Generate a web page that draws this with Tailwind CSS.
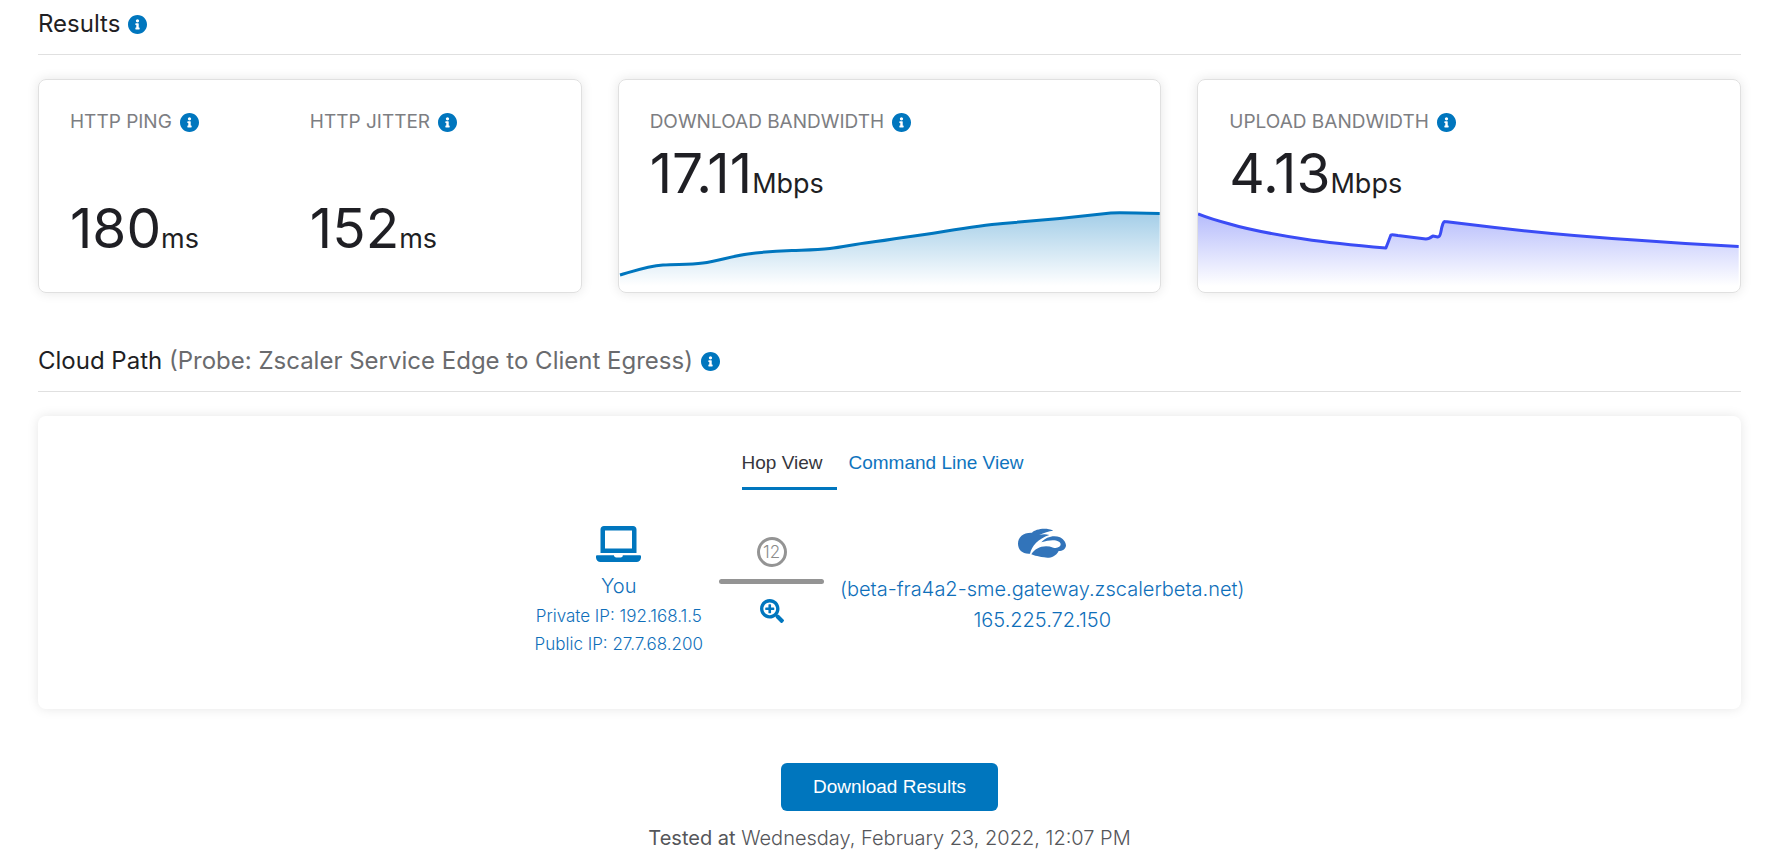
<!DOCTYPE html>
<html lang="en">
<head>
    <meta charset="UTF-8">
    <meta name="viewport" content="width=device-width, initial-scale=1.0">
    <title>Results</title>
    <script src="https://cdn.jsdelivr.net/npm/@tailwindcss/browser@4"></script>
</head>
<body class="bg-white font-['Inter',sans-serif] text-[#1f1f24]">
    <!-- Shared icon -->
    <svg class="hidden">
        <symbol id="info" viewBox="8 8 496 496">
            <path fill="currentColor" d="M256 8C119.043 8 8 119.083 8 256c0 136.997 111.043 248 248 248s248-111.003 248-248C504 119.083 392.957 8 256 8zm0 110c23.196 0 42 18.804 42 42s-18.804 42-42 42-42-18.804-42-42 18.804-42 42-42zm56 254c0 6.627-5.373 12-12 12h-88c-6.627 0-12-5.373-12-12v-24c0-6.627 5.373-12 12-12h12v-64h-12c-6.627 0-12-5.373-12-12v-24c0-6.627 5.373-12 12-12h64c6.627 0 12 5.373 12 12v100h12c6.627 0 12 5.373 12 12v24z"/>
        </symbol>
    </svg>

    <main class="pl-[38px] pr-[35px] pt-2">
        <div class="flex items-center gap-2 h-8">
            <h2 class="text-2xl">Results</h2>
            <button aria-label="About results" class="text-[#0076be]"><svg class="size-[19px]"><use href="#info"/></svg></button>
        </div>
        <hr class="mt-[14px] border-[#e0e0e0]">

        <section class="mt-6 grid grid-cols-3 gap-9">
            <div class="h-[214px] rounded-lg border border-[#e0e0e0] shadow-[0_0_12px_rgba(0,0,0,0.1)] px-[31px] pt-7 grid grid-cols-2 content-start">
                <div>
                    <div class="flex items-center gap-2 h-7">
                        <h3 class="text-[19px] text-[#7d7e82]">HTTP PING</h3>
                        <button aria-label="About HTTP ping" class="text-[#0076be]"><svg class="size-[19px]"><use href="#info"/></svg></button>
                    </div>
                    <p class="mt-[60px] text-[55px] leading-[64px]">180<span class="text-[27px] leading-none">ms</span></p>
                </div>
                <div>
                    <div class="flex items-center gap-2 h-7">
                        <h3 class="text-[19px] text-[#7d7e82]">HTTP JITTER</h3>
                        <button aria-label="About HTTP jitter" class="text-[#0076be]"><svg class="size-[19px]"><use href="#info"/></svg></button>
                    </div>
                    <p class="mt-[60px] text-[55px] leading-[64px]">152<span class="text-[27px] leading-none">ms</span></p>
                </div>
            </div>

            <div class="h-[214px] rounded-lg border border-[#e0e0e0] shadow-[0_0_12px_rgba(0,0,0,0.1)] pt-7 flex flex-col overflow-hidden">
                <div class="flex items-center gap-2 h-7 px-[31px]">
                    <h3 class="text-[19px] text-[#7d7e82]">DOWNLOAD BANDWIDTH</h3>
                    <button aria-label="About download bandwidth" class="text-[#0076be]"><svg class="size-[19px]"><use href="#info"/></svg></button>
                </div>
                <p class="mt-[5px] px-[31px] text-[55px] leading-[64px]">17.11<span class="text-[27px] leading-none">Mbps</span></p>
                <svg class="mt-auto shrink-0 w-full h-[86px]" viewBox="0 0 542 86" preserveAspectRatio="none">
                    <defs>
                        <linearGradient id="downFill" gradientUnits="userSpaceOnUse" x1="0" y1="7" x2="0" y2="80">
                            <stop offset="0" stop-color="#0076be" stop-opacity="0.36"/>
                            <stop offset="1" stop-color="#0076be" stop-opacity="0"/>
                        </linearGradient>
                    </defs>
                    <path fill="url(#downFill)" d="M1 69C15 65 29 60 44 59C58 58 70 59 84 57C99 55 113 50 129 48C143 46 158 45 173 44.500C186 44 198 44 211 42.500C224 41 237 38 250 36.500C262 35 275 33 288 31C320 27 352 20 384 17.500L441 12.500L492 7Q500 6.500 541 7.500V86H1Z"/>
                    <path fill="none" stroke="#0076be" stroke-width="3" d="M1 69C15 65 29 60 44 59C58 58 70 59 84 57C99 55 113 50 129 48C143 46 158 45 173 44.500C186 44 198 44 211 42.500C224 41 237 38 250 36.500C262 35 275 33 288 31C320 27 352 20 384 17.500L441 12.500L492 7Q500 6.500 541 7.500"/>
                </svg>
            </div>

            <div class="h-[214px] rounded-lg border border-[#e0e0e0] shadow-[0_0_12px_rgba(0,0,0,0.1)] pt-7 flex flex-col overflow-hidden">
                <div class="flex items-center gap-2 h-7 px-[31px]">
                    <h3 class="text-[19px] text-[#7d7e82]">UPLOAD BANDWIDTH</h3>
                    <button aria-label="About upload bandwidth" class="text-[#0076be]"><svg class="size-[19px]"><use href="#info"/></svg></button>
                </div>
                <p class="mt-[5px] px-[31px] text-[55px] leading-[64px]">4.13<span class="text-[27px] leading-none">Mbps</span></p>
                <svg class="mt-auto shrink-0 w-full h-[86px]" viewBox="0 0 542 86" preserveAspectRatio="none">
                    <defs>
                        <linearGradient id="upFill" gradientUnits="userSpaceOnUse" x1="0" y1="7" x2="0" y2="80">
                            <stop offset="0" stop-color="#3b4cf5" stop-opacity="0.38"/>
                            <stop offset="1" stop-color="#3b4cf5" stop-opacity="0"/>
                        </linearGradient>
                    </defs>
                    <path fill="url(#upFill)" d="M0 8C10 12 20 15 30 17.500C55 25 80 29 106 33C132 37 158 39.500 188 42Q190 37 193 29Q194 28.500 200 29.500L228 33Q231 33 235 30L240 31Q242 31 243 26Q245 15 247 15.500L297 21.500C344 27 390 31 437 34Q490 38 541 40.500V86H0Z"/>
                    <path fill="none" stroke="#3b4cf5" stroke-width="3" stroke-linejoin="round" d="M0 8C10 12 20 15 30 17.500C55 25 80 29 106 33C132 37 158 39.500 188 42Q190 37 193 29Q194 28.500 200 29.500L228 33Q231 33 235 30L240 31Q242 31 243 26Q245 15 247 15.500L297 21.500C344 27 390 31 437 34Q490 38 541 40.500"/>
                </svg>
            </div>
        </section>

        <div class="mt-[52px] flex items-center gap-2 h-8">
            <h2 class="text-2xl">Cloud Path <span class="text-[#6a6b6e]">(Probe: Zscaler Service Edge to Client Egress)</span></h2>
            <button aria-label="About cloud path" class="text-[#0076be]"><svg class="size-[19px]"><use href="#info"/></svg></button>
        </div>
        <hr class="mt-[14px] border-[#e0e0e0]">

        <section class="mt-6 h-[293px] rounded-lg shadow-[0_0_12px_rgba(0,0,0,0.1)] pt-8 flex flex-col items-center">
            <div role="tablist" class="flex gap-3 font-['Liberation_Sans',sans-serif] text-[19px] leading-[30px]">
                <button role="tab" aria-selected="true" class="pr-3.5 pb-[9px] border-b-3 border-[#0076be] text-[#36363c]">Hop View</button>
                <button role="tab" aria-selected="false" class="pr-3.5 pb-[9px] border-b-3 border-transparent text-[#0f74be]">Command Line View</button>
            </div>

            <div class="mt-9 flex items-start text-[#0f6fba] font-light">
                <div class="flex flex-col items-center">
                    <svg class="w-[45px] h-9 text-[#0076be]" viewBox="0 0 640 512">
                        <path fill="currentColor" d="M624 416H381.54c-.74 19.81-14.71 32-32.74 32H288c-18.69 0-33.02-17.47-32.77-32H16c-8.8 0-16 7.2-16 16v16c0 35.2 28.8 64 64 64h512c35.2 0 64-28.8 64-64v-16c0-8.8-7.2-16-16-16zM576 48c0-26.400-21.600-48-48-48H112C85.600 0 64 21.600 64 48v336h512V48zm-64 272H128V64h384v256z"/>
                    </svg>
                    <p class="mt-2 text-xl leading-8">You</p>
                    <p class="text-[17px] leading-7">Private IP: 192.168.1.5</p>
                    <p class="text-[17px] leading-7">Public IP: 27.7.68.200</p>
                </div>
                <div class="mx-4 mt-[11px] w-[105px] flex flex-col items-center">
                    <span class="size-[30px] rounded-full border-3 border-[#949494] text-[#8b8b8b] text-[17px] leading-6 text-center">12</span>
                    <span class="mt-3 h-[5px] w-full rounded-full bg-[#949494]"></span>
                    <button aria-label="Show hops" class="mt-[15px] text-[#0076be]">
                        <svg class="size-6" viewBox="0 0 512 512">
                            <path fill="currentColor" d="M304 192v32c0 6.600-5.400 12-12 12h-56v56c0 6.600-5.400 12-12 12h-32c-6.600 0-12-5.400-12-12v-56h-56c-6.600 0-12-5.400-12-12v-32c0-6.600 5.400-12 12-12h56v-56c0-6.600 5.400-12 12-12h32c6.600 0 12 5.400 12 12v56h56c6.600 0 12 5.400 12 12zm201 284.700L476.700 505c-9.400 9.400-24.600 9.400-33.900 0l-99.700-99.700c-4.500-4.500-7-10.600-7-17V372c-35.300 27.600-79.700 44-128 44C93.100 416 0 322.900 0 208S93.100 0 208 0s208 93.100 208 208c0 48.300-16.400 92.700-44 128h16.300c6.400 0 12.500 2.500 17 7l99.700 99.700c9.300 9.400 9.300 24.600 0 34zM344 208c0-75.200-60.800-136-136-136S72 132.800 72 208s60.800 136 136 136 136-60.800 136-136z"/>
                        </svg>
                    </button>
                </div>
                <div class="flex flex-col items-center pt-0.5">
                    <svg class="w-12 h-[30px] text-[#3274ba]" viewBox="0 -1 144 90">
                        <path fill="currentColor" d="M36 76C14 78 0 64 0 46C0 26 16 12 42 13C52 2 84-4 106 7C92 8 78 13 64 20C74 17 84 17 94 20C60 32 42 52 36 76Z"/>
                        <path fill="currentColor" d="M40 78C52 58 78 48 106 58C118 61 128 56 128 48C128 36 104 30 70 42C84 25 108 19 126 27C140 34 144 46 144 52C142 62 134 68 122 68C112 88 92 90 78 87C66 86 60 82 52 82Z"/>
                    </svg>
                    <p class="mt-4 text-xl leading-[31px]">(beta-fra4a2-sme.gateway.zscalerbeta.net)</p>
                    <p class="text-xl leading-[31px]">165.225.72.150</p>
                </div>
            </div>
        </section>

        <div class="mt-[54px] flex flex-col items-center">
            <button class="h-12 px-8 rounded-md bg-[#0076be] text-white font-['Liberation_Sans',sans-serif] text-[19px]">Download Results</button>
            <p class="mt-[11px] text-xl leading-8 font-light text-[#55565a]"><span class="font-normal">Tested at</span> Wednesday, February 23, 2022, 12:07 PM</p>
        </div>
    </main>
</body>
</html>
